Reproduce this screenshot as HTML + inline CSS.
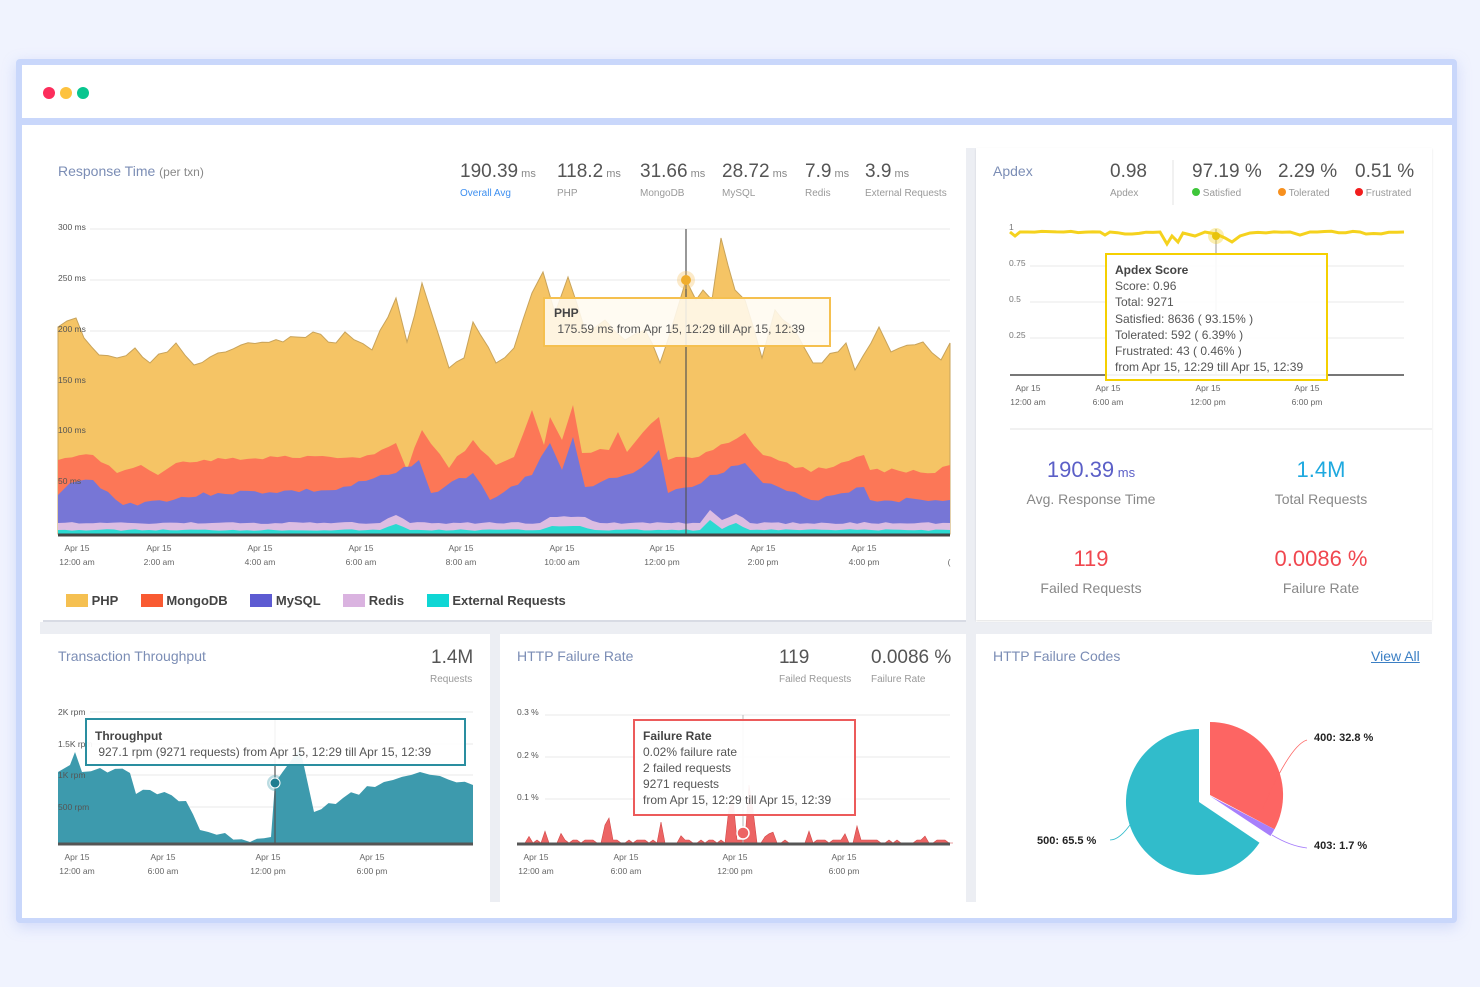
<!DOCTYPE html>
<html><head><meta charset="utf-8"><style>
*{margin:0;padding:0;box-sizing:border-box}
body{width:1480px;height:987px;background:#f0f3fe;font-family:"Liberation Sans",sans-serif;position:relative;overflow:hidden}
.a{position:absolute}
.frame{left:16px;top:59px;width:1441px;height:864px;background:#c9d7fb;border-radius:4px;box-shadow:0 4px 14px rgba(150,170,240,.35)}
.bar{left:22px;top:65px;width:1430px;height:53px;background:#fff}
.content{left:22px;top:125px;width:1430px;height:793px;background:#fff}
.g{background:#eceef3}
.p{background:#fff}
.title{color:#7b8db5;font-size:14px}
.num{color:#555;font-size:19px}
.num small{font-size:11px;color:#888}
.lbl{color:#999;font-size:10px}
.ax{font-size:8.5px;color:#666;text-align:center;line-height:14px}
.yl{position:absolute;font-size:8.5px;color:#555;line-height:10px}
.big{font-size:22px;text-align:center;width:200px}
.sub{font-size:14px;color:#888;text-align:center;width:200px}
.tt{font-size:12px;color:#555;line-height:16px;padding:6px 9px}
.tt b{color:#444}
</style></head><body>
<div class="a frame"></div>
<div class="a bar"></div>
<div class="a" style="left:43px;top:87px;width:12px;height:12px;border-radius:6px;background:#fc2d5b"></div>
<div class="a" style="left:60px;top:87px;width:12px;height:12px;border-radius:6px;background:#fdc23f"></div>
<div class="a" style="left:77px;top:87px;width:12px;height:12px;border-radius:6px;background:#08c68f"></div>
<div class="a content"></div>
<div class="a g" style="left:40px;top:622px;width:1392px;height:12px"></div>
<div class="a g" style="left:966px;top:148px;width:10px;height:754px"></div>
<div class="a g" style="left:490px;top:634px;width:10px;height:268px"></div>
<div class="a p" style="left:976px;top:148px;width:456px;height:472px;box-shadow:0 1px 2px rgba(0,0,0,.12)"></div>
<div class="a" style="left:43px;top:620px;width:923px;height:2px;background:#d8dbe4"></div>

<svg class="a" style="left:0;top:0" width="1480" height="987" id="s">
<g stroke="#e8e8e8" stroke-width="1">
<line x1="90" y1="229" x2="950" y2="229"/><line x1="90" y1="280" x2="950" y2="280"/><line x1="90" y1="331" x2="950" y2="331"/><line x1="90" y1="382" x2="950" y2="382"/><line x1="90" y1="432" x2="950" y2="432"/><line x1="90" y1="483" x2="950" y2="483"/>
<line x1="1030" y1="266" x2="1404" y2="266"/><line x1="1030" y1="302" x2="1404" y2="302"/><line x1="1030" y1="338" x2="1404" y2="338"/>
<line x1="90" y1="712" x2="473" y2="712"/><line x1="90" y1="744" x2="473" y2="744"/><line x1="90" y1="775" x2="473" y2="775"/><line x1="90" y1="807" x2="473" y2="807"/>
<line x1="545" y1="715" x2="950" y2="715"/><line x1="545" y1="757" x2="950" y2="757"/><line x1="545" y1="799" x2="950" y2="799"/>
<line x1="1010" y1="429" x2="1432" y2="429" stroke="#e3e3e3"/>
<line x1="1173" y1="160" x2="1173" y2="205" stroke="#e3e3e3"/>
</g>
<g id="main"></g>
<line x1="686" y1="229" x2="686" y2="534" stroke="#555" stroke-width="1.2"/>
<circle cx="686" cy="280" r="9" fill="#f5c465" opacity=".35"/><circle cx="686" cy="280" r="5" fill="#f0ad2c"/>
<line x1="58" y1="535" x2="950" y2="535" stroke="#444" stroke-width="3"/>
<polyline id="apx" fill="none" stroke="#f5d21e" stroke-width="3"/>
<line x1="1216" y1="229" x2="1216" y2="375" stroke="#999" stroke-width="1"/>
<circle cx="1216" cy="236" r="8" fill="#f5d21e" opacity=".35"/><circle cx="1216" cy="236" r="4" fill="#e8c30c"/>
<line x1="1010" y1="375" x2="1404" y2="375" stroke="#777" stroke-width="2"/>
<path id="thr" fill="#3d9aad"/>
<line x1="275" y1="718" x2="275" y2="843" stroke="#555" stroke-width="1.2"/>
<circle cx="275" cy="783" r="8" fill="#3d9aad" opacity=".35"/><circle cx="275" cy="783" r="5" fill="#1f7d90" stroke="#fff"/>
<line x1="58" y1="844" x2="473" y2="844" stroke="#555" stroke-width="3"/>
<path id="fr" fill="#ec6464" stroke="#d24848" stroke-width=".6"/>
<line x1="743" y1="715" x2="743" y2="843" stroke="#bbb" stroke-width="1"/>
<circle cx="743" cy="833" r="6" fill="#ec6464" stroke="#fff" stroke-width="1.5"/>
<line x1="517" y1="844" x2="950" y2="844" stroke="#555" stroke-width="3"/>
<path d="M1210,795 L1210,722 A73,73 0 0 1 1274.5,829.3 Z" fill="#fd6563"/>
<path d="M1210,796 L1274.5,829.3 A73,73 0 0 1 1270.5,836 Z" fill="#a77ffb"/>
<path d="M1199,802 L1259.5,842.8 A73,73 0 1 1 1199,729 Z" fill="#31bccb"/>
<path d="M1262,810 Q1290,745 1307,740" fill="none" stroke="#fd6563" stroke-width=".8"/>
<path d="M1272,835 Q1290,846 1307,848" fill="none" stroke="#a77ffb" stroke-width=".8"/>
<path d="M1132,822 Q1120,840 1110,840" fill="none" stroke="#31bccb" stroke-width=".8"/>
<g font-family="Liberation Sans" font-size="11" font-weight="bold" fill="#222">
<text x="1314" y="741">400: 32.8 %</text><text x="1314" y="849">403: 1.7 %</text><text x="1037" y="844">500: 65.5 %</text></g>
</svg>

<div class="a title" style="left:58px;top:163px">Response Time <span style="font-size:12px;color:#888">(per txn)</span></div>
<div class="a num" style="left:460px;top:161px">190.39<small> ms</small></div><div class="a lbl" style="left:460px;top:188px;color:#3d8ff0">Overall Avg</div>
<div class="a num" style="left:557px;top:161px">118.2<small> ms</small></div><div class="a lbl" style="left:557px;top:188px">PHP</div>
<div class="a num" style="left:640px;top:161px">31.66<small> ms</small></div><div class="a lbl" style="left:640px;top:188px">MongoDB</div>
<div class="a num" style="left:722px;top:161px">28.72<small> ms</small></div><div class="a lbl" style="left:722px;top:188px">MySQL</div>
<div class="a num" style="left:805px;top:161px">7.9<small> ms</small></div><div class="a lbl" style="left:805px;top:188px">Redis</div>
<div class="a num" style="left:865px;top:161px">3.9<small> ms</small></div><div class="a lbl" style="left:865px;top:188px">External Requests</div>
<div class="yl" style="left:58px;top:222px">300 ms</div>
<div class="yl" style="left:58px;top:273px">250 ms</div>
<div class="yl" style="left:58px;top:324px">200 ms</div>
<div class="yl" style="left:58px;top:375px">150 ms</div>
<div class="yl" style="left:58px;top:425px">100 ms</div>
<div class="yl" style="left:58px;top:476px">50 ms</div>
<div class="a ax" style="left:47px;top:541px;width:60px">Apr 15<br>12:00 am</div>
<div class="a ax" style="left:129px;top:541px;width:60px">Apr 15<br>2:00 am</div>
<div class="a ax" style="left:230px;top:541px;width:60px">Apr 15<br>4:00 am</div>
<div class="a ax" style="left:331px;top:541px;width:60px">Apr 15<br>6:00 am</div>
<div class="a ax" style="left:431px;top:541px;width:60px">Apr 15<br>8:00 am</div>
<div class="a ax" style="left:532px;top:541px;width:60px">Apr 15<br>10:00 am</div>
<div class="a ax" style="left:632px;top:541px;width:60px">Apr 15<br>12:00 pm</div>
<div class="a ax" style="left:733px;top:541px;width:60px">Apr 15<br>2:00 pm</div>
<div class="a ax" style="left:834px;top:541px;width:60px">Apr 15<br>4:00 pm</div>
<div class="a ax" style="left:946px;top:555px;width:6px">(</div>
<div class="a tt" style="left:543px;top:297px;width:288px;height:50px;border:2px solid #f5c04f;background:rgba(255,250,240,.88)"><b>PHP</b><br>&nbsp;175.59 ms from Apr 15, 12:29 till Apr 15, 12:39</div>
<div class="a" style="left:66px;top:593px;font-size:13px;font-weight:bold;color:#444;white-space:nowrap">
<span style="display:inline-block;width:22px;height:13px;background:#f5c051;vertical-align:-2px"></span> PHP
<span style="display:inline-block;width:22px;height:13px;background:#f95a32;vertical-align:-2px;margin-left:19px"></span> MongoDB
<span style="display:inline-block;width:22px;height:13px;background:#5d5bd2;vertical-align:-2px;margin-left:19px"></span> MySQL
<span style="display:inline-block;width:22px;height:13px;background:#dab3e0;vertical-align:-2px;margin-left:19px"></span> Redis
<span style="display:inline-block;width:22px;height:13px;background:#0fd6d4;vertical-align:-2px;margin-left:19px"></span> External Requests</div>

<div class="a title" style="left:993px;top:163px">Apdex</div>
<div class="a num" style="left:1110px;top:161px">0.98</div><div class="a lbl" style="left:1110px;top:188px">Apdex</div>
<div class="a num" style="left:1192px;top:161px">97.19 %</div><div class="a lbl" style="left:1192px;top:188px"><span style="display:inline-block;width:8px;height:8px;border-radius:4px;background:#3ec63a"></span> Satisfied</div>
<div class="a num" style="left:1278px;top:161px">2.29 %</div><div class="a lbl" style="left:1278px;top:188px"><span style="display:inline-block;width:8px;height:8px;border-radius:4px;background:#f7901e"></span> Tolerated</div>
<div class="a num" style="left:1355px;top:161px">0.51 %</div><div class="a lbl" style="left:1355px;top:188px"><span style="display:inline-block;width:8px;height:8px;border-radius:4px;background:#f21d1d"></span> Frustrated</div>
<div class="yl" style="left:1009px;top:222px;color:#777">1</div>
<div class="yl" style="left:1009px;top:258px;color:#777">0.75</div>
<div class="yl" style="left:1009px;top:294px;color:#777">0.5</div>
<div class="yl" style="left:1009px;top:330px;color:#777">0.25</div>
<div class="a ax" style="left:998px;top:381px;width:60px">Apr 15<br>12:00 am</div>
<div class="a ax" style="left:1078px;top:381px;width:60px">Apr 15<br>6:00 am</div>
<div class="a ax" style="left:1178px;top:381px;width:60px">Apr 15<br>12:00 pm</div>
<div class="a ax" style="left:1277px;top:381px;width:60px">Apr 15<br>6:00 pm</div>
<div class="a tt" style="left:1105px;top:253px;width:223px;height:128px;border:2px solid #f5d000;background:rgba(255,255,255,.92);padding:7px 8px;line-height:16.2px"><b>Apdex Score</b><br>Score: 0.96<br>Total: 9271<br>Satisfied: 8636 ( 93.15% )<br>Tolerated: 592 ( 6.39% )<br>Frustrated: 43 ( 0.46% )<br>from Apr 15, 12:29 till Apr 15, 12:39</div>

<div class="a big" style="left:991px;top:457px;color:#5b5fc7">190.39<span style="font-size:13px"> ms</span></div>
<div class="a sub" style="left:991px;top:491px">Avg. Response Time</div>
<div class="a big" style="left:1221px;top:457px;color:#1ea9df">1.4M</div>
<div class="a sub" style="left:1221px;top:491px">Total Requests</div>
<div class="a big" style="left:991px;top:546px;color:#f0474f">119</div>
<div class="a sub" style="left:991px;top:580px">Failed Requests</div>
<div class="a big" style="left:1221px;top:546px;color:#f0474f">0.0086 %</div>
<div class="a sub" style="left:1221px;top:580px">Failure Rate</div>

<div class="a title" style="left:58px;top:648px">Transaction Throughput</div>
<div class="a num" style="left:431px;top:647px">1.4M</div><div class="a lbl" style="left:430px;top:674px">Requests</div>
<div class="yl" style="left:58px;top:707px">2K rpm</div>
<div class="yl" style="left:58px;top:739px">1.5K rpm</div>
<div class="yl" style="left:58px;top:770px">1K rpm</div>
<div class="yl" style="left:58px;top:802px">500 rpm</div>
<div class="a ax" style="left:47px;top:850px;width:60px">Apr 15<br>12:00 am</div>
<div class="a ax" style="left:133px;top:850px;width:60px">Apr 15<br>6:00 am</div>
<div class="a ax" style="left:238px;top:850px;width:60px">Apr 15<br>12:00 pm</div>
<div class="a ax" style="left:342px;top:850px;width:60px">Apr 15<br>6:00 pm</div>
<div class="a tt" style="left:85px;top:718px;width:381px;height:48px;border:2px solid #2a8ea0;background:rgba(255,255,255,.93);padding:8px 8px"><b>Throughput</b><br>&nbsp;927.1 rpm (9271 requests) from Apr 15, 12:29 till Apr 15, 12:39</div>

<div class="a title" style="left:517px;top:648px">HTTP Failure Rate</div>
<div class="a num" style="left:779px;top:647px">119</div><div class="a lbl" style="left:779px;top:674px">Failed Requests</div>
<div class="a num" style="left:871px;top:647px">0.0086 %</div><div class="a lbl" style="left:871px;top:674px">Failure Rate</div>
<div class="yl" style="left:517px;top:707px">0.3 %</div>
<div class="yl" style="left:517px;top:750px">0.2 %</div>
<div class="yl" style="left:517px;top:792px">0.1 %</div>
<div class="a ax" style="left:506px;top:850px;width:60px">Apr 15<br>12:00 am</div>
<div class="a ax" style="left:596px;top:850px;width:60px">Apr 15<br>6:00 am</div>
<div class="a ax" style="left:705px;top:850px;width:60px">Apr 15<br>12:00 pm</div>
<div class="a ax" style="left:814px;top:850px;width:60px">Apr 15<br>6:00 pm</div>
<div class="a tt" style="left:633px;top:719px;width:223px;height:97px;border:2px solid #ec5b5b;background:rgba(255,255,255,.93);padding:7px 8px"><b>Failure Rate</b><br>0.02% failure rate<br>2 failed requests<br>9271 requests<br>from Apr 15, 12:29 till Apr 15, 12:39</div>

<div class="a title" style="left:993px;top:648px">HTTP Failure Codes</div>
<div class="a" style="left:1371px;top:648px;font-size:14px;color:#3b7fc4;text-decoration:underline">View All</div>

<script>
function area(pts,base){var d="M"+pts[0][0]+","+base;pts.forEach(function(p){d+="L"+p[0]+","+p[1]});return d+"L"+pts[pts.length-1][0]+","+base+"Z";}
function wig(pts,amp,seed){var out=[],s=seed;for(var i=0;i<pts.length-1;i++){var a=pts[i],b=pts[i+1];out.push(a);var n=Math.floor((b[0]-a[0])/7);for(var k=1;k<n;k++){s=(s*9301+49297)%233280;var t=k/n;out.push([a[0]+(b[0]-a[0])*t,(a[1]+(b[1]-a[1])*t+(s/233280-.5)*amp).toFixed(1)]);}}out.push(pts[pts.length-1]);return out;}
var php=[[58,327],[76,318],[84,338],[99,355],[117,358],[135,348],[150,363],[176,343],[194,365],[218,353],[241,345],[283,342],[313,332],[336,343],[345,332],[372,350],[396,298],[407,342],[422,283],[449,368],[464,358],[473,322],[496,363],[514,348],[532,293],[543,272],[555,313],[568,277],[585,330],[605,320],[625,340],[645,330],[660,363],[686,280],[696,300],[703,290],[712,300],[721,238],[735,290],[745,300],[762,358],[775,310],[790,325],[813,363],[822,363],[846,343],[855,370],[879,327],[891,352],[923,342],[941,360],[950,343]];
var mon=[[58,460],[93,455],[117,473],[141,465],[158,475],[176,463],[218,458],[300,458],[360,458],[396,443],[407,470],[422,430],[449,468],[473,440],[496,465],[514,457],[532,410],[544,445],[550,417],[562,440],[573,405],[582,453],[609,450],[618,432],[627,452],[659,417],[668,460],[692,458],[713,450],[745,433],[763,455],[811,472],[864,455],[870,470],[935,473],[950,465]];
var my=[[58,495],[70,483],[93,480],[123,505],[218,493],[336,490],[396,473],[419,460],[431,493],[473,473],[490,500],[532,475],[550,443],[562,470],[573,437],[585,487],[609,478],[633,473],[659,450],[668,493],[692,487],[710,475],[745,463],[763,483],[811,500],[864,487],[870,500],[950,500]];
var re=[[58,523],[380,523],[396,515],[410,523],[540,523],[550,517],[585,517],[600,523],[700,523],[710,510],[722,520],[736,514],[750,523],[950,523]];
var ex=[[58,530],[380,530],[396,524],[410,530],[540,530],[552,526],[580,526],[595,530],[700,530],[710,520],[722,529],[736,523],[750,530],[950,530]];
var m=document.getElementById('main'),h='';
[[php,'#f5c465',6,1],[mon,'#fc7757',5,2],[my,'#7776d6',5,3],[re,'#dcbde2',2,4],[ex,'#2bd9d1',1.5,5]].forEach(function(l,i){h+='<path d="'+area(wig(l[0],l[2],l[3]),534)+'" fill="'+l[1]+'"'+(i==0?' stroke="#c8a35a" stroke-width="1"':'')+'/>';});
m.innerHTML=h;
var ap=[[1010,232],[1015,236],[1020,232],[1100,232],[1105,235],[1110,232],[1125,234],[1160,232],[1167,244],[1172,236],[1178,242],[1183,233],[1195,236],[1205,232],[1216,234],[1225,238],[1232,242],[1240,236],[1250,233],[1290,232],[1300,235],[1310,232],[1360,232],[1366,234],[1404,232]];
document.getElementById('apx').setAttribute('points',wig(ap,1.5,7).map(function(p){return p.join(',')}).join(' '));
var th=[[58,772],[70,765],[75,752],[82,772],[100,768],[130,773],[136,794],[150,790],[186,801],[200,830],[225,833],[250,842],[271,837],[275,783],[290,762],[300,748],[304,766],[314,812],[343,798],[375,787],[393,780],[420,772],[440,776],[473,785]];
document.getElementById('thr').setAttribute('d',area(wig(th,8,11),843));
var fr=[[517,843]],x=517,s=3;
while(x<950){x+=4;s=(s*9301+49297)%233280;var r=s/233280;var y=r>0.93?843-6-(r-0.93)*180:(r>0.5?840:843);fr.push([x,y.toFixed(1)]);}
var sp={605:825,609:818,661:822,729:808,733:800,749:785,753:810,857:826};
fr=fr.map(function(p){return sp[p[0]]?[p[0],sp[p[0]]]:p});
document.getElementById('fr').setAttribute('d',area(fr,843));
</script>
</body></html>
